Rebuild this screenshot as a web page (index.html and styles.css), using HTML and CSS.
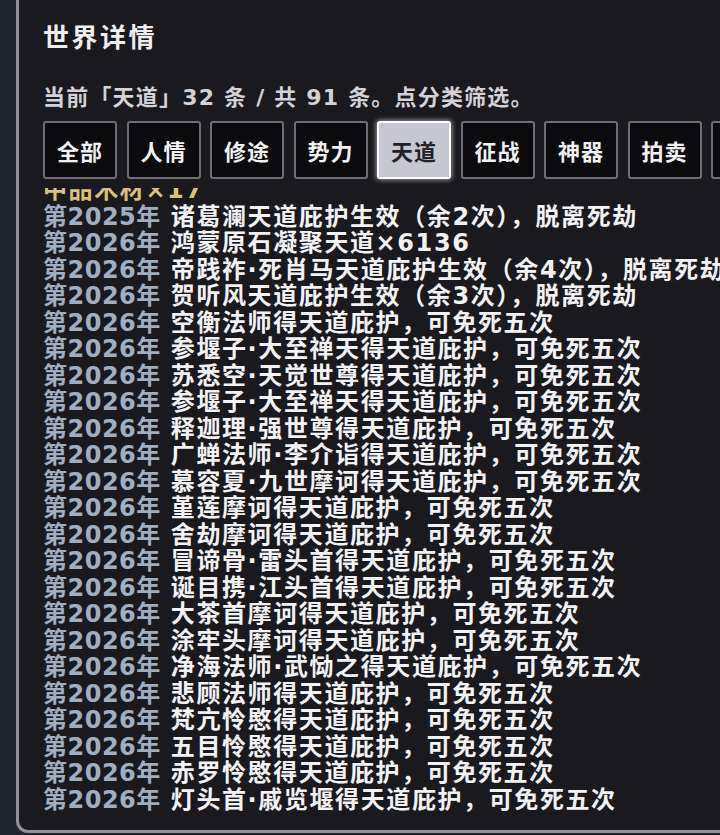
FILE: index.html
```html
<!DOCTYPE html>
<html lang="zh">
<head>
<meta charset="utf-8">
<title>世界详情</title>
<link rel="stylesheet" href="styles.css">
</head>
<body>
<div class="panel">
  <h1 class="title">世界详情</h1>
  <p class="summary">当前「天道」32 条 / 共 91 条。点分类筛选。</p>
  <div class="tabs">
    <button class="tab">全部</button>
    <button class="tab">人情</button>
    <button class="tab">修途</button>
    <button class="tab">势力</button>
    <button class="tab active">天道</button>
    <button class="tab">征战</button>
    <button class="tab">神器</button>
    <button class="tab">拍卖</button>
    <button class="tab">其他</button>
  </div>
  <div class="log">
    <div class="log-inner">
      <div class="row loot">中品木材×17</div>
      <div class="row"><span class="year">第2025年</span>诸葛澜天道庇护生效（余2次），脱离死劫</div>
      <div class="row"><span class="year">第2026年</span>鸿蒙原石凝聚天道×6136</div>
      <div class="row"><span class="year">第2026年</span>帝践祚·死肖马天道庇护生效（余4次），脱离死劫</div>
      <div class="row"><span class="year">第2026年</span>贺听风天道庇护生效（余3次），脱离死劫</div>
      <div class="row"><span class="year">第2026年</span>空衡法师得天道庇护，可免死五次</div>
      <div class="row"><span class="year">第2026年</span>参堰子·大至禅天得天道庇护，可免死五次</div>
      <div class="row"><span class="year">第2026年</span>苏悉空·天觉世尊得天道庇护，可免死五次</div>
      <div class="row"><span class="year">第2026年</span>参堰子·大至禅天得天道庇护，可免死五次</div>
      <div class="row"><span class="year">第2026年</span>释迦理·强世尊得天道庇护，可免死五次</div>
      <div class="row"><span class="year">第2026年</span>广蝉法师·李介诣得天道庇护，可免死五次</div>
      <div class="row"><span class="year">第2026年</span>慕容夏·九世摩诃得天道庇护，可免死五次</div>
      <div class="row"><span class="year">第2026年</span>堇莲摩诃得天道庇护，可免死五次</div>
      <div class="row"><span class="year">第2026年</span>舍劫摩诃得天道庇护，可免死五次</div>
      <div class="row"><span class="year">第2026年</span>冒谛骨·雷头首得天道庇护，可免死五次</div>
      <div class="row"><span class="year">第2026年</span>诞目携·江头首得天道庇护，可免死五次</div>
      <div class="row"><span class="year">第2026年</span>大茶首摩诃得天道庇护，可免死五次</div>
      <div class="row"><span class="year">第2026年</span>涂牢头摩诃得天道庇护，可免死五次</div>
      <div class="row"><span class="year">第2026年</span>净海法师·武恸之得天道庇护，可免死五次</div>
      <div class="row"><span class="year">第2026年</span>悲顾法师得天道庇护，可免死五次</div>
      <div class="row"><span class="year">第2026年</span>梵亢怜愍得天道庇护，可免死五次</div>
      <div class="row"><span class="year">第2026年</span>五目怜愍得天道庇护，可免死五次</div>
      <div class="row"><span class="year">第2026年</span>赤罗怜愍得天道庇护，可免死五次</div>
      <div class="row"><span class="year">第2026年</span>灯头首·戚览堰得天道庇护，可免死五次</div>
    </div>
  </div>
</div>
</body>
</html>
```

FILE: styles.css
```css
html, body {
  margin: 0;
  padding: 0;
}
body {
  background: #21252d;
  width: 720px;
  height: 835px;
  overflow: hidden;
  font-family: "DejaVu Sans", "Noto Sans CJK SC", sans-serif;
}
.panel {
  margin-left: 16px;
  width: 900px;
  height: 833px;
  box-sizing: border-box;
  background: #1a191e;
  border-left: 3px solid #8f9198;
  border-bottom: 3px solid #8f9198;
  border-bottom-left-radius: 12px;
  padding-left: 24px;
  display: flex;
  flex-direction: column;
}
.title {
  margin: 19px 0 0;
  font-size: 26px;
  line-height: 34px;
  font-weight: 700;
  letter-spacing: 2.5px;
  color: #efeff1;
  font-family: "Noto Sans CJK SC", sans-serif;
}
.summary {
  margin: 30px 0 0;
  font-size: 22px;
  line-height: 30px;
  letter-spacing: 1.2px;
  color: #d2d2d7;
  font-weight: 700;
}
.tabs {
  margin-top: 8px;
  display: flex;
  gap: 9.5px;
}
.tab {
  flex: none;
  width: 74px;
  height: 58px;
  box-sizing: border-box;
  background: #0b0a0d;
  border: 2px solid #6d6d72;
  border-radius: 3px;
  color: #f2f2f2;
  font-family: "Noto Sans CJK SC", sans-serif;
  font-size: 22px;
  font-weight: 700;
  padding: 0;
  letter-spacing: 1px;
}
.tab.active {
  background: #c6c7d0;
  border-color: #ffffff;
  color: #222226;
  box-shadow: 0 0 5px 1px rgba(255, 255, 255, 0.55);
}
.log {
  margin-top: 9px;
  flex: 1;
  overflow: hidden;
}
.log-inner {
  margin-top: -11px;
}
.row {
  white-space: nowrap;
  font-size: 24px;
  line-height: 26.5px;
  letter-spacing: 1.6px;
  color: #f3f3f5;
  font-weight: 700;
}
.row.loot {
  color: #d8c27a;
}
.year {
  color: #a0aec0;
  margin-right: 10px;
  letter-spacing: 0.5px;
}
```
